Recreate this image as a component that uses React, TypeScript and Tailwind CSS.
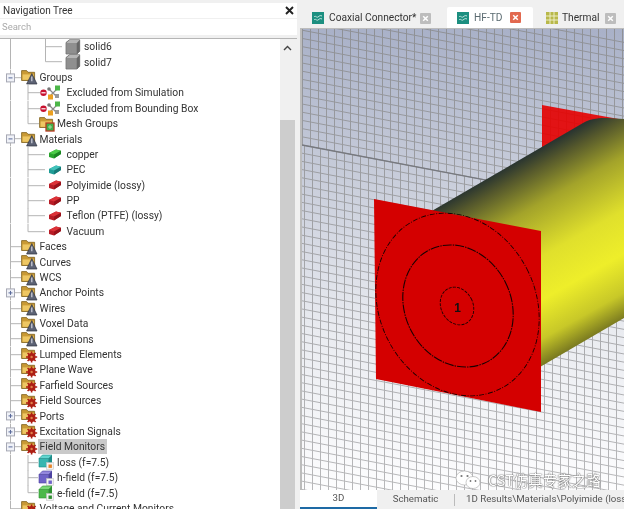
import React from "react";

const FONT = "font-['Roboto','Open_Sans',sans-serif]";

function Folder() {
  return (
    <g>
      <path d="M0.6 11.5V1.6h5l1.4 1.7h6.6v8.2Z" fill="#c99a35" stroke="#7d5f1c" strokeWidth="0.8" />
      <path d="M1.6 5.4h11.2v5.4H1.6Z" fill="#eec763" />
    </g>
  );
}

function WarnFolder() {
  return (
    <svg width="17" height="16" viewBox="0 0 17 16" className="shrink-0">
      <Folder />
      <path d="M10.8 4.6 16 15H5.6Z" fill="#5c6274" stroke="#2f3340" strokeWidth="0.7" />
      <path d="M10.8 7.6v4.6" stroke="#c9cdd8" strokeWidth="1.3" />
    </svg>
  );
}

function GearFolder() {
  return (
    <svg width="17" height="16" viewBox="0 0 17 16" className="shrink-0">
      <Folder />
      <circle cx="10.6" cy="10" r="3.9" fill="#ad1f14" />
      <g stroke="#ad1f14" strokeWidth="1.6">
        <path d="M10.6 4.4v11.2M5 10h11.2M6.6 6l8 8M14.6 6l-8 8" />
      </g>
      <circle cx="10.6" cy="10" r="1.2" fill="#e0824d" />
    </svg>
  );
}

function Solid() {
  return (
    <svg width="16" height="16" viewBox="0 0 16 16" className="shrink-0">
      <path d="M1 3.5 4.5 0.8h10.2v11.4L12 15H1Z" fill="#7f7f7f" stroke="#5c5c5c" strokeWidth="0.7" />
      <path d="M1.3 4H11.8V14.7H1.3Z" fill="#8f8f8f" />
      <path d="M11.8 4 14.5 1v11L11.8 14.7Z" fill="#666" />
      <path d="M1.3 4 4.6 1h9.9l-2.7 3Z" fill="#b5b5b5" />
    </svg>
  );
}

function Brick({ a, b, c }: { a: string; b: string; c: string }) {
  return (
    <svg width="14" height="12" viewBox="0 0 14 12" className="shrink-0">
      <path d="M1 5 8 1.5l5 1.2V6L6 10.5 1 9Z" fill={a} />
      <path d="M1 5 8 1.5l5 1.2L6.2 6.4Z" fill={b} />
      <path d="M6.2 6.4 13 2.7V6L6 10.5Z" fill={c} />
    </svg>
  );
}

function Excluded() {
  return (
    <svg width="22" height="15" viewBox="0 0 22 15" className="shrink-0">
      <circle cx="3.5" cy="7.8" r="3.2" fill="#c8102e" />
      <path d="M1.4 7.8h4.2" stroke="#fff" strokeWidth="1.2" />
      <path d="M9 4 13 8M13 8l5-5M13 8l4 4M13 8l-3 3" stroke="#888" strokeWidth="1.2" />
      <circle cx="9" cy="4" r="1.8" fill="#777" />
      <rect x="15" y="0.5" width="5" height="5" fill="#4cb648" />
      <rect x="8" y="9.5" width="5" height="5" fill="#eba021" />
      <rect x="15" y="9" width="4" height="4" fill="#999" />
    </svg>
  );
}

function MeshFolder() {
  return (
    <svg width="17" height="16" viewBox="0 0 17 16" className="shrink-0">
      <Folder />
      <rect x="7" y="7" width="8" height="8" fill="#3fae49" stroke="#b53a20" strokeWidth="1.3" />
      <path d="M9 11h4M11 9v4" stroke="#bde6b5" strokeWidth="0.8" />
    </svg>
  );
}

function Monitor({ a, b, c, badge }: { a: string; b: string; c: string; badge: string }) {
  return (
    <svg width="16" height="16" viewBox="0 0 16 16" className="shrink-0">
      <path d="M1 4.5h9.5V13H1Z" fill={a} stroke={c} strokeWidth="0.6" />
      <path d="M1 4.5 4.5 1H14L10.5 4.5Z" fill={b} stroke={c} strokeWidth="0.6" />
      <path d="M10.5 4.5 14 1v8.5l-3.5 3.5Z" fill={c} />
      <rect x="8.5" y="8.5" width="7" height="7" fill="#f2f2f2" stroke="#bbb" strokeWidth="0.5" />
      <rect x="10.5" y="10.5" width="3.4" height="3.4" fill={badge} />
    </svg>
  );
}

type Spec = {
  label: string;
  icon: React.ReactNode;
  iconX: number;
  labelX: number;
  v?: number[];
  half?: number;
  h?: [number, number];
  exp?: "+" | "-";
  sel?: boolean;
};

const warn = <WarnFolder />;
const gear = <GearFolder />;
const red = <Brick a="#b81c26" b="#dc3238" c="#98121a" />;

const top = (label: string, icon: React.ReactNode, exp?: "+" | "-", sel?: boolean): Spec => ({
  label,
  icon,
  iconX: 21,
  labelX: 39.5,
  h: [10.5, 21],
  exp,
  sel,
});

const rows: Spec[] = [
  { label: "solid6", icon: <Solid />, iconX: 65, labelX: 84, v: [45.5], h: [45.5, 62] },
  { label: "solid7", icon: <Solid />, iconX: 65, labelX: 84, half: 45.5, h: [45.5, 62] },
  top("Groups", warn, "-"),
  { label: "Excluded from Simulation", icon: <Excluded />, iconX: 40, labelX: 66.5, v: [28], h: [28, 40] },
  { label: "Excluded from Bounding Box", icon: <Excluded />, iconX: 40, labelX: 66.5, v: [28], h: [28, 40] },
  { label: "Mesh Groups", icon: <MeshFolder />, iconX: 39, labelX: 57, half: 28, h: [28, 39] },
  top("Materials", warn, "-"),
  { label: "copper", icon: <Brick a="#28a32c" b="#4ccb48" c="#1a8522" />, iconX: 48, labelX: 66.5, v: [28], h: [28, 45] },
  { label: "PEC", icon: <Brick a="#1f9c96" b="#42c2ba" c="#167a78" />, iconX: 48, labelX: 66.5, v: [28], h: [28, 45] },
  { label: "Polyimide (lossy)", icon: red, iconX: 48, labelX: 66.5, v: [28], h: [28, 45] },
  { label: "PP", icon: red, iconX: 48, labelX: 66.5, v: [28], h: [28, 45] },
  { label: "Teflon (PTFE) (lossy)", icon: red, iconX: 48, labelX: 66.5, v: [28], h: [28, 45] },
  { label: "Vacuum", icon: red, iconX: 48, labelX: 66.5, half: 28, h: [28, 45] },
  top("Faces", warn),
  top("Curves", warn),
  top("WCS", warn),
  top("Anchor Points", warn, "+"),
  top("Wires", warn),
  top("Voxel Data", warn),
  top("Dimensions", warn),
  top("Lumped Elements", gear),
  top("Plane Wave", gear),
  top("Farfield Sources", gear),
  top("Field Sources", gear),
  top("Ports", gear, "+"),
  top("Excitation Signals", gear, "+"),
  top("Field Monitors", gear, "-", true),
  { label: "loss (f=7.5)", icon: <Monitor a="#36b6b0" b="#62d4ce" c="#1c8c88" badge="#e8852a" />, iconX: 38, labelX: 57, v: [28], h: [28, 38] },
  { label: "h-field (f=7.5)", icon: <Monitor a="#6f62c8" b="#9488dd" c="#4c42a0" badge="#6f62c8" />, iconX: 38, labelX: 57, v: [28], h: [28, 38] },
  { label: "e-field (f=7.5)", icon: <Monitor a="#4cb84a" b="#7ad876" c="#2e9030" badge="#2e9030" />, iconX: 38, labelX: 57, half: 28, h: [28, 38] },
  top("Voltage and Current Monitors", gear),
];

function TreeRow({ r }: { r: Spec }) {
  const H = 15.4;
  const c = H / 2;
  const line = { stroke: "#b4b4b4", strokeWidth: 1 };
  return (
    <div className="flex h-[15.4px] items-center">
      <svg width={r.iconX} height={H} className="shrink-0 overflow-visible">
        <line x1="10.5" x2="10.5" y1="0" y2={H} {...line} />
        {(r.v ?? []).map((x) => (
          <line key={x} x1={x} x2={x} y1="0" y2={H} {...line} />
        ))}
        {r.half !== undefined && <line x1={r.half} x2={r.half} y1="0" y2={c} {...line} />}
        {r.h && <line x1={r.h[0]} x2={r.h[1]} y1={c} y2={c} {...line} />}
        {r.exp && (
          <g>
            <rect x="6.5" y={c - 3.8} width="8" height="8" fill="#f0f2f8" stroke="#a6a8b4" />
            <line x1="8.5" x2="12.5" y1={c + 0.2} y2={c + 0.2} stroke="#5a6a9a" />
            {r.exp === "+" && <line x1="10.5" x2="10.5" y1={c - 1.8} y2={c + 2.2} stroke="#5a6a9a" />}
          </g>
        )}
      </svg>
      <div className="flex shrink-0 items-center" style={{ width: r.labelX - r.iconX }}>
        {r.icon}
      </div>
      <span
        className={`-ml-[1.5px] whitespace-nowrap px-[1.5px] text-[10.3px] leading-[15px] text-[#333] ${r.sel ? "bg-[#c9c9c9]" : ""}`}
      >
        {r.label}
      </span>
    </div>
  );
}

function Wave({ bg, fg }: { bg: string; fg: string }) {
  return (
    <svg width="12" height="12" viewBox="0 0 12 12" className="shrink-0">
      <rect width="12" height="12" fill={bg} />
      <path d="M2 5c1.5-2 2.5 1 4 0s2-2 4-1M2 8c1.5-2 2.5 1 4 0s2-2 4-1" stroke={fg} strokeWidth="1" fill="none" />
    </svg>
  );
}

function Thermal() {
  return (
    <svg width="12" height="12" viewBox="0 0 12 12" className="shrink-0">
      <rect width="12" height="12" fill="#b8b84a" />
      <path d="M0 4h12M0 8h12M4 0v12M8 0v12" stroke="#f2f2d0" strokeWidth="0.9" />
    </svg>
  );
}

function Close({ on }: { on?: boolean }) {
  return (
    <span className={`flex h-[11px] w-[11px] shrink-0 items-center justify-center rounded-[1px] ${on ? "bg-[#e2694f]" : "bg-[#bdbdbd]"}`}>
      <svg width="7" height="7" viewBox="0 0 7 7">
        <path d="M1.2 1.2 5.8 5.8M5.8 1.2 1.2 5.8" stroke="#fff" strokeWidth="1.5" />
      </svg>
    </span>
  );
}

function Scene() {
  const grid: React.ReactNode[] = [];
  const major = (x: number) => 145 + 0.19 * (x - 301);
  for (let i = 0; i < 42; i++) {
    const xa = 302.5 + i * 8;
    grid.push(<line key={"a" + i} x1={xa} x2={xa} y1="29" y2={major(xa)} />);
    const xb = 304.5 + i * 8;
    grid.push(<line key={"b" + i} x1={xb} x2={xb} y1={major(xb)} y2="490" />);
  }
  for (let i = -20; i < 62; i++) {
    const y = 145 + i * 8.2;
    grid.push(<line key={"h" + i} x1="302" x2="624" y1={y} y2={y + 0.19 * 323} />);
  }
  return (
    <svg viewBox="302 29 322 461" className="block h-full w-full" preserveAspectRatio="none">
      <defs>
        <linearGradient id="sky" x1="0" x2="0" y1="29" y2="490" gradientUnits="userSpaceOnUse">
          <stop offset="0" stopColor="#a9b1c8" />
          <stop offset="0.3" stopColor="#c6cbd9" />
          <stop offset="0.65" stopColor="#e9ebf0" />
          <stop offset="1" stopColor="#fdfdfe" />
        </linearGradient>
        <linearGradient id="ink" x1="0" x2="0" y1="29" y2="490" gradientUnits="userSpaceOnUse">
          <stop offset="0" stopColor="#8f9196" />
          <stop offset="1" stopColor="#b8b8ba" />
        </linearGradient>
        <linearGradient id="cyl" x1="520" y1="160" x2="613" y2="325" gradientUnits="userSpaceOnUse">
          <stop offset="0" stopColor="#2a3530" />
          <stop offset="0.08" stopColor="#55582c" />
          <stop offset="0.25" stopColor="#a3a32a" />
          <stop offset="0.5" stopColor="#e0e02c" />
          <stop offset="0.7" stopColor="#eeee2a" />
          <stop offset="0.88" stopColor="#c8c828" />
          <stop offset="1" stopColor="#7a7a20" />
        </linearGradient>
      </defs>
      <rect x="302" y="29" width="322" height="461" fill="url(#sky)" />
      <g stroke="url(#ink)" strokeWidth="1">{grid}</g>
      <line x1="302" x2="624" y1="145" y2={145 + 0.19 * 323} stroke="#77797f" strokeWidth="1.3" />
      <path d="M542 105 624 120V160H542Z" fill="#e60000" fillOpacity="0.9" />
      <path d="M430 212 583 123C592 118 600 118 607 118L624 119V318L540 367V300Z" fill="url(#cyl)" />
      <path d="M374 199 541 231V412L376 379Z" fill="#d40000" />
      <g fill="none" stroke="#1a0000" strokeWidth="0.9">
        <ellipse cx="457.5" cy="304.5" rx="78" ry="94.5" transform="rotate(-27 457.5 304.5)" strokeDasharray="5 1.5 1 1.5" />
        <ellipse cx="458" cy="306" rx="53" ry="63" transform="rotate(-27 458 306)" strokeDasharray="9 1 1.5 1" strokeWidth="1.1" />
        <ellipse cx="457" cy="306" rx="16" ry="19.5" transform="rotate(-27 457 306)" strokeDasharray="3 1.2" />
      </g>
      <text x="457.5" y="312" textAnchor="middle" fontSize="12" fontWeight="700" fill="#111" fontFamily="'Liberation Sans',sans-serif">
        1
      </text>
    </svg>
  );
}

export default function App() {
  return (
    <div className={`flex h-[509px] w-[624px] overflow-hidden bg-[#f0f0f0] blur-[0.3px] ${FONT}`}>
      <aside className="flex w-[297px] shrink-0 flex-col pt-[3px]">
        <div className="flex h-[15px] items-center justify-between bg-white pl-[3px] pr-[3px] text-[10px] text-[#333]">
          <span>Navigation Tree</span>
          <svg width="9" height="9" viewBox="0 0 9 9">
            <path d="M1 1 8 8M8 1 1 8" stroke="#222" strokeWidth="1.9" />
          </svg>
        </div>
        <div className="mt-[1px] flex h-[16px] items-center bg-white pl-[2px] text-[9.5px] text-[#aaa]">Search</div>
        <div className="mt-[3px] flex min-h-0 flex-1 border-t border-[#b5b5b5] bg-white">
          <div className="min-w-0 flex-1 overflow-hidden">
            {rows.map((r) => (
              <TreeRow key={r.label} r={r} />
            ))}
          </div>
          <div className="flex w-[15px] shrink-0 flex-col bg-[#f0f0f0]">
            <div className="flex h-[81px] items-start justify-center pt-[6px]">
              <svg width="9" height="6" viewBox="0 0 9 6">
                <path d="M1 5 4.5 1.5 8 5" stroke="#444" strokeWidth="1.4" fill="none" />
              </svg>
            </div>
            <div className="flex-1 bg-[#cdcdcd]" />
          </div>
          <div className="w-[2px] shrink-0 bg-[#f0f0f0]" />
        </div>
      </aside>
      <main className="flex min-w-0 flex-1 flex-col pl-[3px]">
        <div className="flex h-[28px] shrink-0 items-end text-[10.2px] text-[#333]">
          <div className="flex h-[20px] w-[147px] shrink-0 items-center pl-[12px]">
            <Wave bg="#1c8f80" fg="#c6e6e0" />
            <span className="ml-[5px] w-[91px] whitespace-nowrap">Coaxial Connector*</span>
            <Close />
          </div>
          <div className="flex h-[21px] w-[86px] shrink-0 items-center rounded-t-[2px] bg-white pl-[10px]">
            <Wave bg="#1c8f80" fg="#c6e6e0" />
            <span className="ml-[5px] w-[36px] whitespace-nowrap text-[#5a6a70]">HF-TD</span>
            <Close on />
          </div>
          <div className="flex h-[20px] flex-1 items-center pl-[13px]">
            <Thermal />
            <span className="ml-[4px] w-[43px] whitespace-nowrap">Thermal</span>
            <Close />
          </div>
        </div>
        <div className="relative min-h-0 flex-1 border-l-2 border-t border-[#bcbcbc]">
          <Scene />
          <div className="absolute bottom-[0px] left-[153px] flex items-center gap-[7px] text-[14.5px] leading-[18px] text-white [font-family:'Noto_Sans_CJK_SC',sans-serif] [text-shadow:0_0_1.5px_#555,0_0_1px_#555]">
            <svg width="26" height="20" viewBox="0 0 26 20" className="shrink-0">
              <ellipse cx="9.5" cy="8" rx="8.5" ry="7" fill="#fff" stroke="#999" strokeWidth="0.5" />
              <ellipse cx="18" cy="12.5" rx="7" ry="6" fill="#fff" stroke="#999" strokeWidth="0.5" />
              <circle cx="6.5" cy="6" r="1.1" fill="#777" />
              <circle cx="12.5" cy="6" r="1.1" fill="#777" />
              <circle cx="15.5" cy="11" r="0.9" fill="#777" />
              <circle cx="20.5" cy="11" r="0.9" fill="#777" />
            </svg>
            <span className="whitespace-nowrap">CST仿真专家之路</span>
          </div>
        </div>
        <div className="flex h-[19px] shrink-0 items-center overflow-hidden text-[9.7px] text-[#555]">
          <div className="flex h-full w-[77px] shrink-0 items-center justify-center border-b-2 border-[#1e6aa5] bg-white">3D</div>
          <div className="w-[77px] shrink-0 text-center">Schematic</div>
          <div className="h-[12px] w-px shrink-0 bg-[#bbb]" />
          <div className="ml-[11px] whitespace-nowrap">1D Results\Materials\Polyimide (lossy)</div>
        </div>
      </main>
    </div>
  );
}
